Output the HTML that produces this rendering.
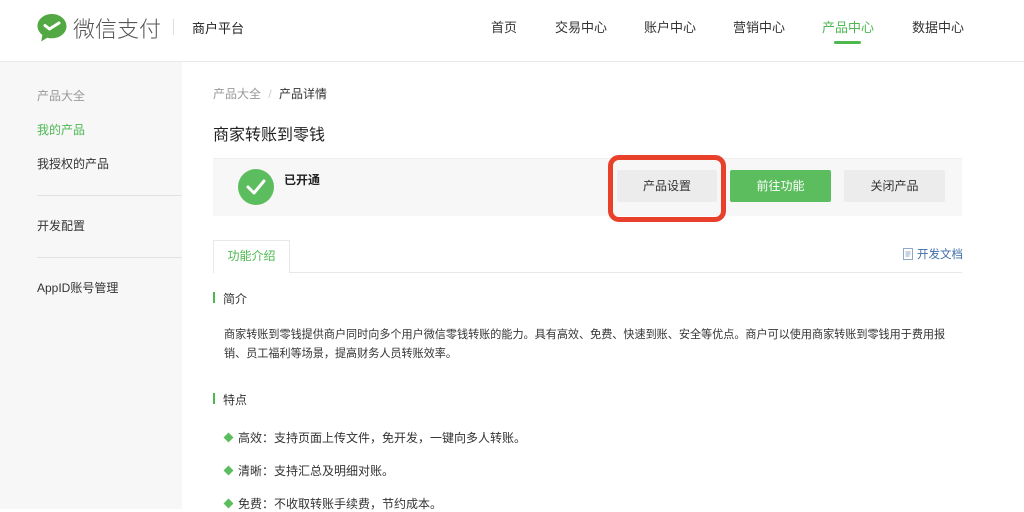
<!DOCTYPE html>
<html><head><meta charset="utf-8"><style>
*{margin:0;padding:0;box-sizing:border-box}
body{width:1024px;height:509px;overflow:hidden;background:#fff;font-family:"Liberation Sans","Noto Sans CJK SC",sans-serif;color:#333;position:relative}
.a{position:absolute;white-space:nowrap}
.hdr{position:absolute;left:0;top:0;width:1024px;height:62px;border-bottom:1px solid #e8e8e8}
.nav{font-size:13px;top:17px;color:#333}
.side{position:absolute;left:0;top:62px;width:182px;height:447px;background:#f7f7f7}
.s{font-size:12px;left:37px}
.hr{position:absolute;left:37px;width:145px;height:1px;background:#e2e2e2}
.btn{position:absolute;top:170px;height:32px;width:101px;font-size:12px;text-align:center;line-height:32px;border-radius:2px}
.p{font-size:12px;color:#333}
.dia{position:absolute;width:7px;height:7px;background:#5cbd5e;transform:rotate(45deg)}
</style></head><body>
<div class="hdr"></div>
<svg class="a" style="left:36px;top:13px" width="32" height="30" viewBox="0 0 32 30"><path d="M16 1C8 1 1.5 6.3 1.5 13c0 3.6 1.9 6.8 4.9 9l-1.2 6.5 6-3.8c1.5.4 3.1.6 4.8.6 8 0 14.5-5.3 14.5-12S24 1 16 1z" fill="#52a842"/><path d="M9 12.5l4.5 3.5 9.5-6" stroke="#fff" stroke-width="3" fill="none" stroke-linecap="round" stroke-linejoin="round"/></svg>
<div class="a" style="left:73px;top:12px;font-size:22px;color:#555;font-weight:300">微信支付</div>
<div class="a" style="left:173px;top:19px;width:1px;height:16px;background:#ddd"></div>
<div class="a" style="left:192px;top:18px;font-size:13px;color:#222">商户平台</div>
<div class="a nav" style="left:491px">首页</div>
<div class="a nav" style="left:555px">交易中心</div>
<div class="a nav" style="left:644px">账户中心</div>
<div class="a nav" style="left:733px">营销中心</div>
<div class="a nav" style="left:822px;color:#4cb84f">产品中心</div>
<div class="a" style="left:834px;top:41px;width:27px;height:3px;background:#4cb84f;border-radius:2px"></div>
<div class="a nav" style="left:912px">数据中心</div>
<div class="side"></div>
<div class="a s" style="top:87px;color:#999">产品大全</div>
<div class="a s" style="top:121px;color:#4cb84f">我的产品</div>
<div class="a s" style="top:155px;color:#333">我授权的产品</div>
<div class="hr" style="top:195px"></div>
<div class="a s" style="top:217px;color:#333">开发配置</div>
<div class="hr" style="top:257px"></div>
<div class="a s" style="top:279px;color:#333">AppID账号管理</div>
<div class="a" style="left:213px;top:85px;font-size:12px;color:#999">产品大全 <span style="color:#ccc;margin:0 4px">/</span> <span style="color:#333">产品详情</span></div>
<div class="a" style="left:213px;top:121px;font-size:16px;color:#222">商家转账到零钱</div>
<div class="a" style="left:213px;top:158px;width:749px;height:58px;background:#f7f7f7;border-top:1px solid #eee"></div>
<svg class="a" style="left:238px;top:169px" width="36" height="36"><circle cx="18" cy="18" r="18" fill="#5cbd5e"/><path d="M10 18l6 6 10-12" stroke="#fff" stroke-width="3" fill="none" stroke-linecap="round" stroke-linejoin="round"/></svg>
<div class="a" style="left:284px;top:171px;font-size:12px;color:#222;font-weight:bold">已开通</div>
<div class="btn" style="left:617px;background:#ececec;color:#333;width:100px">产品设置</div>
<div class="btn" style="left:730px;background:#5cbd5e;color:#fff">前往功能</div>
<div class="btn" style="left:844px;background:#ececec;color:#333">关闭产品</div>
<div class="a" style="left:608px;top:155px;width:118px;height:67px;border:5px solid #e8402a;border-radius:11px"></div>
<div class="a" style="left:213px;top:272px;width:749px;height:1px;background:#e8e8e8"></div>
<div class="a" style="left:213px;top:240px;width:77px;height:33px;border:1px solid #e8e8e8;border-bottom:none;background:#fff;font-size:12px;color:#4cb84f;text-align:center;line-height:31px">功能介绍</div>
<svg class="a" style="left:903px;top:248px" width="10" height="12"><rect x="0.5" y="0.5" width="9" height="11" fill="none" stroke="#8fa8c8"/><path d="M2.5 4h5M2.5 6h5M2.5 8h4" stroke="#8fa8c8"/></svg>
<div class="a" style="left:917px;top:246px;font-size:11.5px;color:#3f6ea8">开发文档</div>
<div class="a" style="left:213px;top:292px;width:2px;height:11px;background:#4cb84f"></div>
<div class="a p" style="left:223px;top:290px">简介</div>
<div class="a p" style="left:224px;top:326px;line-height:19px;font-size:11.1px">商家转账到零钱提供商户同时向多个用户微信零钱转账的能力。具有高效、免费、快速到账、安全等优点。商户可以使用商家转账到零钱用于费用报<br>销、员工福利等场景，提高财务人员转账效率。</div>
<div class="a" style="left:213px;top:393px;width:2px;height:11px;background:#4cb84f"></div>
<div class="a p" style="left:223px;top:391px">特点</div>
<div class="dia" style="left:225px;top:434px"></div><div class="a p" style="left:238px;top:429px">高效：支持页面上传文件，免开发，一键向多人转账。</div>
<div class="dia" style="left:225px;top:467px"></div><div class="a p" style="left:238px;top:462px">清晰：支持汇总及明细对账。</div>
<div class="dia" style="left:225px;top:500px"></div><div class="a p" style="left:238px;top:495px">免费：不收取转账手续费，节约成本。</div>
</body></html>
